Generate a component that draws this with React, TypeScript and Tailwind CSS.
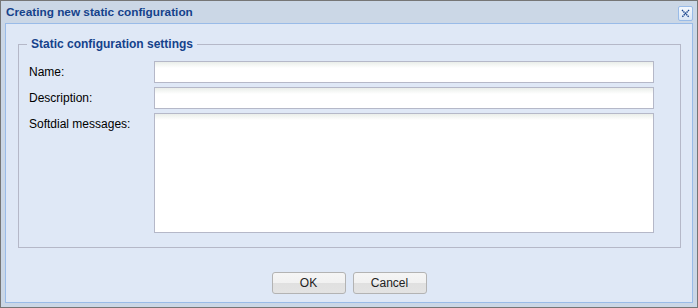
import type { ReactNode } from 'react';

const font = { fontFamily: 'Tahoma, "Liberation Sans", Arial, sans-serif' };

function CloseTool() {
  return (
    <button
      type="button"
      className="flex h-[15px] w-[15px] items-center justify-center rounded-[2px] border border-[#99bbe8] bg-[linear-gradient(#f4f8fd,#d9e6f6)]"
    >
      <svg width="9" height="9" viewBox="0 0 9 9">
        <path d="M1 1L8 8M8 1L1 8" stroke="#15428b" strokeWidth="1.4" strokeDasharray="1.4 0.6" />
      </svg>
    </button>
  );
}

function FieldRow({ label, children }: { label: string; children: ReactNode }) {
  return (
    <div className="flex">
      <label className="w-[125px] shrink-0 pt-[3px] text-[12px] leading-[16px] text-black">{label}</label>
      {children}
    </div>
  );
}

function TextInput() {
  return (
    <input
      type="text"
      className="h-[22px] w-[500px] border border-[#b5b8c8] bg-[linear-gradient(#eaeeea,#ffffff_6px)] px-1 text-[12px] outline-none"
    />
  );
}

function Button({ children }: { children: ReactNode }) {
  return (
    <button
      type="button"
      className="h-[22px] w-[74px] rounded-[3px] border border-[#b3b3b3] bg-[linear-gradient(#f5f5f5_0%,#f1f1f1_50%,#e0e0e0_50%,#e3e3e3_100%)] text-[12px] leading-[20px] text-[#222]"
    >
      {children}
    </button>
  );
}

export default function App() {
  return (
    <div style={font} className="flex h-[308px] w-[698px] flex-col border border-[#767676] bg-[#cbd7e6] px-1 pb-1">
      <div className="flex h-[22px] items-center justify-between pt-[1px]">
        <span className="pl-[1px] text-[11.8px] font-bold text-[#15428b]">Creating new static configuration</span>
        <div className="mt-[2px]">
          <CloseTool />
        </div>
      </div>

      <div className="flex flex-1 flex-col border border-[#99bbe8] bg-[#dfe8f6]">
        <fieldset className="ml-[12px] mr-[11px] mt-[14px] border border-[#b5b8c8] pb-[14px] pl-[10px] pr-[26px] pt-[10px]">
          <legend className="-ml-[2px] h-[13px] px-[4px] text-[12px] font-bold leading-[13px] text-[#15428b]">
            Static configuration settings
          </legend>
          <div className="flex flex-col gap-[4px]">
            <FieldRow label="Name:">
              <TextInput />
            </FieldRow>
            <FieldRow label="Description:">
              <TextInput />
            </FieldRow>
            <FieldRow label="Softdial messages:">
              <textarea className="h-[120px] w-[500px] resize-none border border-[#b5b8c8] bg-[linear-gradient(#eaeeea,#ffffff_6px)] px-1 text-[12px] outline-none" />
            </FieldRow>
          </div>
        </fieldset>

        <div className="mt-[24px] flex justify-center gap-[7px]">
          <Button>OK</Button>
          <Button>Cancel</Button>
        </div>
      </div>
    </div>
  );
}
